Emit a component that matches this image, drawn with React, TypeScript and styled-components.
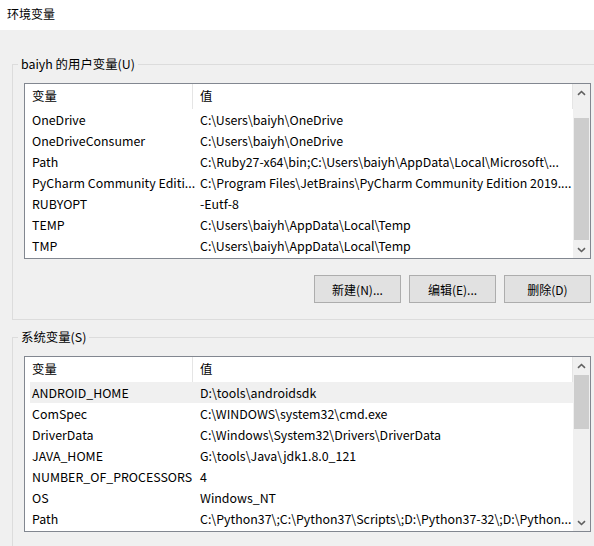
import React from "react";
import styled, { createGlobalStyle } from "styled-components";

const GlobalStyle = createGlobalStyle`
  html, body {
    margin: 0;
    padding: 0;
    background: #f0f0f0;
  }
  body {
    font-family: "Noto Sans CJK SC", "Microsoft YaHei", sans-serif;
    font-size: 12.4px;
    color: #000;
  }
`;

type Row = { name: string; value: string };

const userVars: Row[] = [
  { name: "OneDrive", value: "C:\\Users\\baiyh\\OneDrive" },
  { name: "OneDriveConsumer", value: "C:\\Users\\baiyh\\OneDrive" },
  { name: "Path", value: "C:\\Ruby27-x64\\bin;C:\\Users\\baiyh\\AppData\\Local\\Microsoft\\..." },
  { name: "PyCharm Community Editi...", value: "C:\\Program Files\\JetBrains\\PyCharm Community Edition 2019...." },
  { name: "RUBYOPT", value: "-Eutf-8" },
  { name: "TEMP", value: "C:\\Users\\baiyh\\AppData\\Local\\Temp" },
  { name: "TMP", value: "C:\\Users\\baiyh\\AppData\\Local\\Temp" },
];

const sysVars: Row[] = [
  { name: "ANDROID_HOME", value: "D:\\tools\\androidsdk" },
  { name: "ComSpec", value: "C:\\WINDOWS\\system32\\cmd.exe" },
  { name: "DriverData", value: "C:\\Windows\\System32\\Drivers\\DriverData" },
  { name: "JAVA_HOME", value: "G:\\tools\\Java\\jdk1.8.0_121" },
  { name: "NUMBER_OF_PROCESSORS", value: "4" },
  { name: "OS", value: "Windows_NT" },
  { name: "Path", value: "C:\\Python37\\;C:\\Python37\\Scripts\\;D:\\Python37-32\\;D:\\Python..." },
];

const Window = styled.div`
  width: 594px;
  height: 546px;
  overflow: hidden;
  display: flex;
  flex-direction: column;
`;

const TitleBar = styled.div`
  height: 30px;
  flex: none;
  background: #fff;
  padding-left: 7px;
  font-size: 12px;
  line-height: 28px;
`;

const Body = styled.div`
  padding: 34px 0 0 12px;
  display: flex;
  flex-direction: column;
  gap: 17px;
`;

const GroupBox = styled.div`
  position: relative;
  border: 1px solid #dcdcdc;
  border-right: none;
  width: 620px;
  padding: 18px 0 16px 11px;
`;

const Legend = styled.span`
  position: absolute;
  top: -10px;
  left: 5px;
  padding: 0 3px;
  background: #f0f0f0;
  line-height: 18px;
`;

const ListBox = styled.div`
  width: 565px;
  border: 1px solid #828790;
  background: #fff;
  display: flex;
`;

const Columns = styled.div`
  flex: 1;
  min-width: 0;
  display: flex;
  flex-direction: column;
  padding-bottom: 2px;
`;

const HeaderRow = styled.div`
  height: 25px;
  display: flex;
  align-items: center;
`;

const HeaderCell = styled.div<{ $w?: number }>`
  box-sizing: border-box;
  height: 25px;
  line-height: 25px;
  padding-left: 7px;
  ${(p) => (p.$w ? `width: ${p.$w}px;` : "flex: 1;")}
  border-right: 1px solid #e5e5e5;
`;

const DataRow = styled.div<{ $selected?: boolean }>`
  height: 21px;
  display: flex;
  align-items: flex-start;
  margin-left: 5px;
  background: ${(p) => (p.$selected ? "#f0f0f0" : "transparent")};
`;

const Cell = styled.div<{ $w?: number; $pad: number; $clip?: boolean }>`
  box-sizing: border-box;
  padding: 2px 0 0 ${(p) => p.$pad}px;
  white-space: nowrap;
  overflow: ${(p) => (p.$clip ? "hidden" : "visible")};
  line-height: 19px;
  ${(p) => (p.$w ? `width: ${p.$w}px; flex: none;` : "flex: 1; min-width: 0;")}
`;

const ScrollBar = styled.div`
  width: 17px;
  flex: none;
  background: #f0f0f0;
  display: flex;
  flex-direction: column;
`;

const ArrowBtn = styled.div`
  height: 17px;
  flex: none;
  display: flex;
  align-items: center;
  justify-content: center;
`;

const Track = styled.div<{ $before: number; $thumb: number }>`
  flex: 1;
  display: flex;
  flex-direction: column;
  &::before {
    content: "";
    height: ${(p) => p.$before}px;
    flex: none;
  }
  &::after {
    content: "";
    height: ${(p) => p.$thumb}px;
    margin: 0 1px;
    background: #cdcdcd;
    flex: none;
  }
`;

const ButtonRow = styled.div`
  width: 567px;
  display: flex;
  justify-content: flex-end;
  gap: 8px;
  margin-top: 16px;
`;

const Button = styled.button`
  width: 87px;
  height: 28px;
  background: #e1e1e1;
  border: 1px solid #adadad;
  font-family: inherit;
  font-size: 12px;
  color: #000;
  padding: 0;
  border-radius: 0;
`;

const Chevron = ({ down }: { down?: boolean }) => (
  <svg width="9" height="6" viewBox="0 0 9 6">
    <path
      d={down ? "M1 1.2 L4.5 4.5 L8 1.2" : "M1 4.8 L4.5 1.5 L8 4.8"}
      fill="none"
      stroke="#606060"
      strokeWidth="1.6"
    />
  </svg>
);

function VarList({ rows, before, thumb, selected }: { rows: Row[]; before: number; thumb: number; selected?: number }) {
  return (
    <ListBox>
      <Columns>
        <HeaderRow>
          <HeaderCell $w={168}>变量</HeaderCell>
          <HeaderCell>值</HeaderCell>
        </HeaderRow>
        {rows.map((r, i) => (
          <DataRow key={r.name + i} $selected={i === selected}>
            <Cell $w={163} $pad={2}>{r.name}</Cell>
            <Cell $pad={7} $clip>{r.value}</Cell>
          </DataRow>
        ))}
      </Columns>
      <ScrollBar>
        <ArrowBtn>
          <Chevron />
        </ArrowBtn>
        <Track $before={before} $thumb={thumb} />
        <ArrowBtn>
          <Chevron down />
        </ArrowBtn>
      </ScrollBar>
    </ListBox>
  );
}

export default function App() {
  return (
    <Window>
      <GlobalStyle />
      <TitleBar>环境变量</TitleBar>
      <Body>
        <GroupBox>
          <Legend>baiyh 的用户变量(U)</Legend>
          <VarList rows={userVars} before={17} thumb={122} />
          <ButtonRow>
            <Button>新建(N)...</Button>
            <Button>编辑(E)...</Button>
            <Button>删除(D)</Button>
          </ButtonRow>
        </GroupBox>
        <GroupBox>
          <Legend>系统变量(S)</Legend>
          <VarList rows={sysVars} before={1} thumb={54} selected={0} />
        </GroupBox>
      </Body>
    </Window>
  );
}
